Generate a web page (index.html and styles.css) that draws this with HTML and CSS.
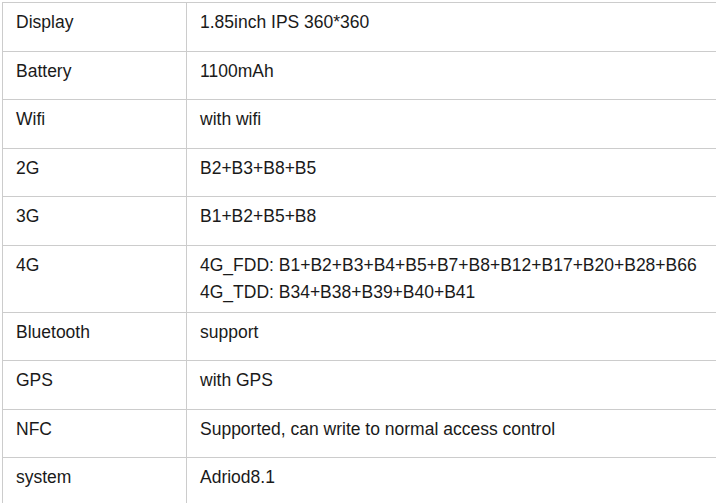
FILE: index.html
```html
<!DOCTYPE html>
<html>
<head>
<meta charset="utf-8">
<link rel="stylesheet" href="styles.css">
</head>
<body>
<div class="frame">
<table class="spec">
  <tbody>
    <tr><td class="key">Display</td><td class="val">1.85inch IPS 360*360</td></tr>
    <tr><td class="key">Battery</td><td class="val">1100mAh</td></tr>
    <tr><td class="key">Wifi</td><td class="val">with wifi</td></tr>
    <tr><td class="key">2G</td><td class="val">B2+B3+B8+B5</td></tr>
    <tr><td class="key">3G</td><td class="val">B1+B2+B5+B8</td></tr>
    <tr><td class="key">4G</td><td class="val">4G_FDD: B1+B2+B3+B4+B5+B7+B8+B12+B17+B20+B28+B66<br>4G_TDD: B34+B38+B39+B40+B41</td></tr>
    <tr><td class="key">Bluetooth</td><td class="val">support</td></tr>
    <tr><td class="key">GPS</td><td class="val">with GPS</td></tr>
    <tr><td class="key">NFC</td><td class="val">Supported, can write to normal access control</td></tr>
    <tr><td class="key">system</td><td class="val">Adriod8.1</td></tr>
  </tbody>
</table>
</div>
</body>
</html>
```

FILE: styles.css
```css
html, body {
  margin: 0;
  padding: 0;
  background: #ffffff;
}
body {
  font-family: "Liberation Sans", Arial, sans-serif;
  font-size: 17.5px;
  color: #1a1a1a;
}
.frame {
  width: 716px;
  height: 503px;
  overflow: hidden;
  padding: 2px 0 0 2px;
  box-sizing: border-box;
}
.spec {
  border-collapse: collapse;
  width: 760px;
}
.spec td {
  border: 1px solid #cccccc;
  vertical-align: top;
  padding: 6px 13px;
  line-height: 27px;
  height: 35.5px;
}
.spec .key {
  width: 157px;
}
```
